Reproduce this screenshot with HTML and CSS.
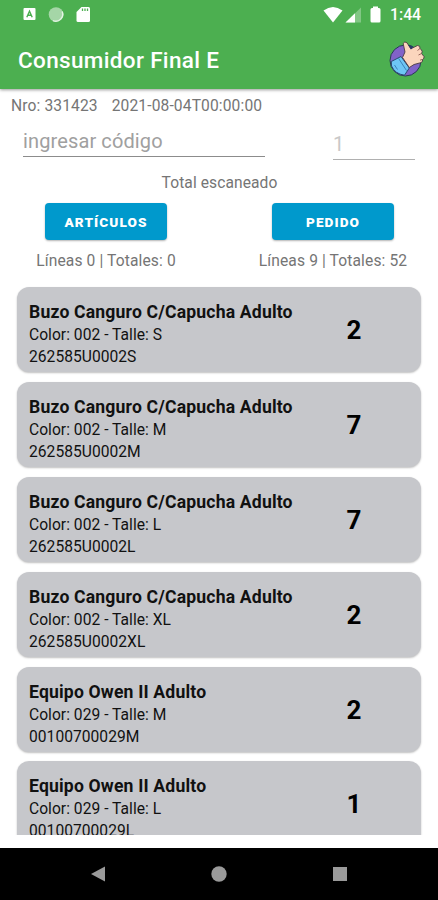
FILE: index.html
```html
<!DOCTYPE html>
<html lang="es">
<head>
    <meta charset="UTF-8">
    <meta name="viewport" content="width=device-width, initial-scale=1">
    <title>Consumidor Final E</title>
    <link rel="stylesheet" href="styles.css">
</head>
<body>

    <header class="header">
        <div class="statusbar">
            <svg class="status-left" width="70" height="18" viewBox="0 0 70 18">
                <rect x="0.5" y="2" width="12" height="12" rx="1" fill="#fff"/>
                <path d="M3.8 11.2L6.5 5.2L9.2 11.2M5 9.2H8" fill="none" stroke="#4caf50" stroke-width="1.4"/>
                <circle cx="33" cy="8.5" r="7.300" fill="#a5d6a7"/>
                <path d="M39.200 5.500A7 7 0 0 1 30 14.600" fill="none" stroke="#e4f4e4" stroke-width="1.4"/>
                <path d="M58.5 1H65.5Q67 1 67 2.500V14.500Q67 16 65.500 16H55Q53.500 16 53.500 14.500V6Z" fill="#fff"/>
                <path d="M59.500 2.500V5M62 2.500V5M64.500 2.500V5" stroke="#4caf50" stroke-width="1.300"/>
            </svg>
            <svg class="status-right" width="60" height="18" viewBox="0 0 60 18">
                <path d="M0.500 4.500Q10 -2.500 19.500 4.500L10 16.500Z" fill="#fff"/>
                <path d="M38 1.500V16.500H22.500Z" fill="#82c785"/>
                <path d="M32 7.200V16.500H22.500Z" fill="#fff"/>
                <path d="M50 0.500H55V2H56Q57.500 2 57.500 3.500V15Q57.500 16.500 56 16.500H49Q47.500 16.500 47.500 15V3.500Q47.500 2 49 2H50Z" fill="#fff"/>
            </svg>
            <span class="clock">1:44</span>
        </div>
        <div class="toolbar">
            <h1>Consumidor Final E</h1>
            <svg class="thumb" width="38" height="38" viewBox="0 0 38 38">
                <circle cx="18.500" cy="20.500" r="15.500" fill="#8162c8" stroke="#263c50" stroke-width="1"/>
                <path d="M4.300 21.500L14 16.500L22.300 28L17.500 35.200Q8 34 4.500 26Z" fill="#6ec6f5" stroke="#294b70" stroke-width="1"/>
                <path d="M11.500 18.300L19.500 30.500M7.500 25L10.500 29.500" fill="none" stroke="#3579b2" stroke-width="0.900"/>
                <path d="M15.500 17.500L18 12L16.200 3.500Q17.500 0.800 20 2.800L23.800 8.800L30.500 5.500Q33.500 5.500 33 8.500L34.500 10Q36 11.800 34.500 13.500L37 16.500Q37.500 18.500 35.500 19.500L35.500 21Q35 23 32.500 23L27 24.500L22.300 27.500Z" fill="#fbd5bd" stroke="#493b42" stroke-width="0.900"/>
                <path d="M30.500 10.500L33 8.500M31.500 15L34.500 13.500M33 20.200L35 19.500" fill="none" stroke="#8d5c54" stroke-width="0.900"/>
                <path d="M21 4.500L26.500 6.500L24 9.500Z" fill="#263c65"/>
            </svg>
        </div>
    </header>

    <main class="content">
        <div class="order-info">
            <span class="order-nro">Nro: 331423</span>
            <span class="order-date">2021-08-04T00:00:00</span>
        </div>

        <div class="inputs">
            <input class="input-code" type="text" placeholder="ingresar código">
            <input class="input-qty" type="text" placeholder="1">
        </div>

        <p class="scan-title">Total escaneado</p>

        <div class="totals">
            <div class="total total-left">
                <button class="button">ARTÍCULOS</button>
                <p>Líneas 0 | Totales: 0</p>
            </div>
            <div class="total total-right">
                <button class="button">PEDIDO</button>
                <p>Líneas 9 | Totales: 52</p>
            </div>
        </div>

        <div class="list">
            <div class="card">
                <div class="card-text">
                    <h2>Buzo Canguro C/Capucha Adulto</h2>
                    <p>Color: 002 - Talle: S</p>
                    <p class="code">262585U0002S</p>
                </div>
                <span class="qty">2</span>
            </div>
            <div class="card">
                <div class="card-text">
                    <h2>Buzo Canguro C/Capucha Adulto</h2>
                    <p>Color: 002 - Talle: M</p>
                    <p class="code">262585U0002M</p>
                </div>
                <span class="qty">7</span>
            </div>
            <div class="card">
                <div class="card-text">
                    <h2>Buzo Canguro C/Capucha Adulto</h2>
                    <p>Color: 002 - Talle: L</p>
                    <p class="code">262585U0002L</p>
                </div>
                <span class="qty">7</span>
            </div>
            <div class="card">
                <div class="card-text">
                    <h2>Buzo Canguro C/Capucha Adulto</h2>
                    <p>Color: 002 - Talle: XL</p>
                    <p class="code">262585U0002XL</p>
                </div>
                <span class="qty">2</span>
            </div>
            <div class="card">
                <div class="card-text">
                    <h2>Equipo Owen II Adulto</h2>
                    <p>Color: 029 - Talle: M</p>
                    <p class="code">00100700029M</p>
                </div>
                <span class="qty">2</span>
            </div>
            <div class="card">
                <div class="card-text">
                    <h2>Equipo Owen II Adulto</h2>
                    <p>Color: 029 - Talle: L</p>
                    <p class="code">00100700029L</p>
                </div>
                <span class="qty">1</span>
            </div>
        </div>
    </main>

    <nav class="navbar">
        <svg width="16" height="16" viewBox="0 0 16 16"><path d="M1 8L15 0.500V15.500Z" fill="#9a9a9a"/></svg>
        <svg width="16" height="16" viewBox="0 0 16 16"><circle cx="8" cy="8" r="7.700" fill="#9a9a9a"/></svg>
        <svg width="16" height="16" viewBox="0 0 16 16"><rect x="1" y="1" width="14" height="14" fill="#9a9a9a"/></svg>
    </nav>

</body>
</html>
```
FILE: styles.css
```css
* {
    box-sizing: border-box;
}

body {
    margin: 0;
    height: 900px;
    display: flex;
    flex-direction: column;
    overflow: hidden;
    background-color: #fff;
    color: #757575;
    font-family: Roboto, sans-serif;
}

h1, h2, p {
    margin: 0;
}

svg {
    display: block;
}

/* Header */
.header {
    flex: none;
    height: 89px;
    background-color: #4caf50;
    color: #fff;
    box-shadow: 0 1px 3px rgba(0, 0, 0, 0.4);
}

.statusbar {
    display: flex;
    align-items: center;
    height: 29px;
    padding: 0 17px 0 23px;
}

.status-right {
    margin-left: auto;
}

.clock {
    width: 31px;
    margin-left: 7px;
    font-size: 15.8px;
    font-weight: 500;
    line-height: 29px;
}

.toolbar {
    display: flex;
    align-items: center;
    justify-content: space-between;
    height: 60px;
    padding: 0 13px 1px 18px;
}

.toolbar h1 {
    padding-top: 2px;
    font-size: 22.5px;
    font-weight: 500;
    letter-spacing: 0.34px;
}

/* Content */
.content {
    flex: none;
    height: 746px;
    overflow: hidden;
    padding-top: 7px;
}

.order-info {
    display: flex;
    gap: 14px;
    height: 20px;
    padding-left: 11px;
    font-size: 15.6px;
    letter-spacing: 0.12px;
    line-height: 20px;
}

.inputs {
    display: flex;
    justify-content: space-between;
    height: 45px;
    padding: 0 23px;
}

.inputs input {
    border: none;
    border-bottom: 1px solid #8c8c8c;
    background: none;
    font-family: inherit;
    font-size: 20px;
}

.inputs input::placeholder {
    color: #a0a0a0;
}

.inputs .input-code {
    width: 242px;
    height: 41px;
    padding: 10px 0 0;
    letter-spacing: 0.12px;
}

.inputs .input-qty {
    width: 82px;
    height: 44px;
    padding: 12px 0 0;
    border-bottom-color: #b0b0b0;
}

.inputs .input-qty::placeholder {
    color: #c8c8c8;
}

.scan-title {
    height: 42px;
    padding: 12px 0 0 1px;
    font-size: 15.6px;
    letter-spacing: 0.08px;
    line-height: 20px;
    text-align: center;
}

.totals {
    display: flex;
    justify-content: space-between;
    height: 84px;
    padding: 0 30px 0 31px;
}

.total {
    width: 150px;
    text-align: center;
    font-size: 15.6px;
    letter-spacing: 0.12px;
    line-height: 20px;
    white-space: nowrap;
}

.button {
    display: block;
    width: 122px;
    height: 37px;
    margin: 0 auto 11px;
    padding: 0;
    border: none;
    border-radius: 4px;
    background-color: #0099cc;
    box-shadow: 0 1px 2px rgba(0, 0, 0, 0.3);
    color: #fff;
    font-family: inherit;
    font-size: 13.6px;
    font-weight: 900;
    letter-spacing: 1.1px;
}

/* Items */
.list {
    display: flex;
    flex-direction: column;
    gap: 9.9px;
    padding: 0 17px;
}

.card {
    display: flex;
    flex: none;
    height: 85px;
    padding: 14px 12px 0;
    border-radius: 12px;
    background-color: #c6c7cb;
    box-shadow: 0 1px 2px rgba(0, 0, 0, 0.25);
    color: #111;
}

.card-text {
    width: 303px;
    font-size: 15.6px;
    letter-spacing: 0.03px;
    line-height: 22px;
    white-space: nowrap;
}

.card-text h2 {
    font-size: 17.6px;
    font-weight: 700;
    letter-spacing: 0.17px;
    line-height: 23px;
}

.qty {
    width: 44px;
    color: #000;
    font-size: 26px;
    font-weight: 700;
    line-height: 58px;
    text-align: center;
}

/* Navigation */
.navbar {
    flex: none;
    display: flex;
    align-items: center;
    justify-content: space-between;
    height: 52px;
    margin-top: 13px;
    padding: 0 90px;
    background-color: #000;
}
```
